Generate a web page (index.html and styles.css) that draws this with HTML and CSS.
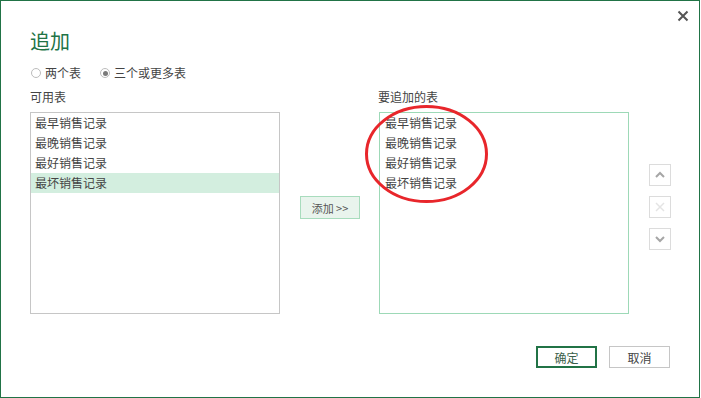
FILE: index.html
```html
<!DOCTYPE html>
<html lang="zh-CN">
<head>
    <meta charset="UTF-8">
    <meta name="viewport" content="width=device-width, initial-scale=1.0">
    <link rel="stylesheet" href="styles.css">
    <title>追加</title>
</head>
<body>

<div class="dialog">
    <button class="close" title="关闭">
        <svg width="12" height="12" viewBox="0 0 12 12"><path d="M1.5 1.5 L10.5 10.5 M10.5 1.5 L1.5 10.5" stroke="#555" stroke-width="2" fill="none"/></svg>
    </button>

    <h1 class="title">追加</h1>

    <div class="modes">
        <label class="radio"><span class="dot"></span>两个表</label>
        <label class="radio checked"><span class="dot"></span>三个或更多表</label>
    </div>

    <div class="panels">
        <div class="panel">
            <div class="panel-label">可用表</div>
            <ul class="list">
                <li>最早销售记录</li>
                <li>最晚销售记录</li>
                <li>最好销售记录</li>
                <li class="selected">最坏销售记录</li>
            </ul>
        </div>

        <div class="middle">
            <button class="add">添加 &gt;&gt;</button>
        </div>

        <div class="panel target">
            <div class="panel-label">要追加的表</div>
            <ul class="list green">
                <li>最早销售记录</li>
                <li>最晚销售记录</li>
                <li>最好销售记录</li>
                <li>最坏销售记录</li>
            </ul>
            <!-- 红圈标注 -->
            <svg class="mark" width="128" height="104" viewBox="0 0 128 104">
                <ellipse cx="63.5" cy="51" rx="60" ry="47.5" fill="none" stroke="#e8262b" stroke-width="3"/>
            </svg>
        </div>

        <div class="order">
            <button class="small">
                <svg width="12" height="12" viewBox="0 0 12 12"><path d="M2 8 L6 4 L10 8" stroke="#a6a6a6" stroke-width="2" fill="none"/></svg>
            </button>
            <button class="small">
                <svg width="12" height="12" viewBox="0 0 12 12"><path d="M2 2 L10 10 M10 2 L2 10" stroke="#e4e4e4" stroke-width="1.5" fill="none"/></svg>
            </button>
            <button class="small">
                <svg width="12" height="12" viewBox="0 0 12 12"><path d="M2 4 L6 8 L10 4" stroke="#a6a6a6" stroke-width="2" fill="none"/></svg>
            </button>
        </div>
    </div>

    <div class="footer">
        <button class="btn ok">确定</button>
        <button class="btn">取消</button>
    </div>
</div>

</body>
</html>
```

FILE: styles.css
```css
body {
    margin: 0;
    background-color: #fff;
    color: #444;
    font-family: "Noto Sans CJK SC", "Microsoft YaHei", sans-serif;
    font-size: 12px;
}

.dialog {
    position: relative;
    width: 700px;
    height: 398px;
    box-sizing: border-box;
    border: 1px solid #217346;
    padding: 0 29px;
}

.close {
    position: absolute;
    top: 8px;
    right: 9px;
    width: 14px;
    height: 14px;
    padding: 1px;
    border: none;
    background: transparent;
    line-height: 0;
}

.title {
    margin: 28px 0 0;
    font-size: 20px;
    font-weight: normal;
    line-height: 24px;
    color: #217346;
}

/* 单选 */
.modes {
    display: flex;
    gap: 18px;
    margin-top: 12px;
    line-height: 16px;
}

.radio {
    display: flex;
    align-items: center;
    gap: 4px;
}

.dot {
    position: relative;
    width: 8px;
    height: 8px;
    border: 1px solid #bcbcbc;
    border-radius: 50%;
    margin-left: 1px;
}

.checked .dot::after {
    content: "";
    position: absolute;
    top: 1.5px;
    left: 1.5px;
    width: 5px;
    height: 5px;
    border-radius: 50%;
    background-color: #7a7a7a;
}

/* 列表区域 */
.panels {
    display: flex;
    gap: 20px;
    margin-top: 8px;
}

.panel {
    position: relative;
}

.panel-label {
    line-height: 16px;
    margin-bottom: 7px;
}

.target .panel-label {
    margin-left: -1px;
}

.list {
    list-style: none;
    margin: 0;
    padding: 0;
    width: 250px;
    height: 202px;
    box-sizing: border-box;
    border: 1px solid #c6c6c6;
}

.list.green {
    border-color: #9dd9b7;
}

.list li {
    height: 20px;
    line-height: 20px;
    padding-left: 4px;
    color: #444;
}

.list.green li {
    padding-left: 5px;
}

.list li.selected {
    background-color: #d3eedf;
}

.mark {
    position: absolute;
    top: 14px;
    left: -16px;
}

.middle {
    width: 59px;
    padding-top: 107px;
}

.add {
    width: 60px;
    height: 23px;
    padding: 0;
    border: 1px solid #a8dcbd;
    background-color: #e9f4ed;
    color: #555;
    font-family: inherit;
    font-size: 11px;
}

.order {
    display: flex;
    flex-direction: column;
    gap: 10px;
    padding-top: 75px;
}

.small {
    width: 22px;
    height: 22px;
    padding: 0;
    border: 1px solid #dcdcdc;
    background-color: #fff;
    line-height: 0;
}

/* 底部按钮 */
.footer {
    display: flex;
    justify-content: flex-end;
    gap: 12px;
    margin-top: 32px;
}

.btn {
    width: 61px;
    height: 22px;
    padding: 0;
    border: 1px solid #c6c6c6;
    background-color: #fff;
    color: #444;
    font-family: inherit;
    font-size: 12px;
}

.btn.ok {
    border: 2px solid #217346;
    color: #3b5f4b;
}
```
